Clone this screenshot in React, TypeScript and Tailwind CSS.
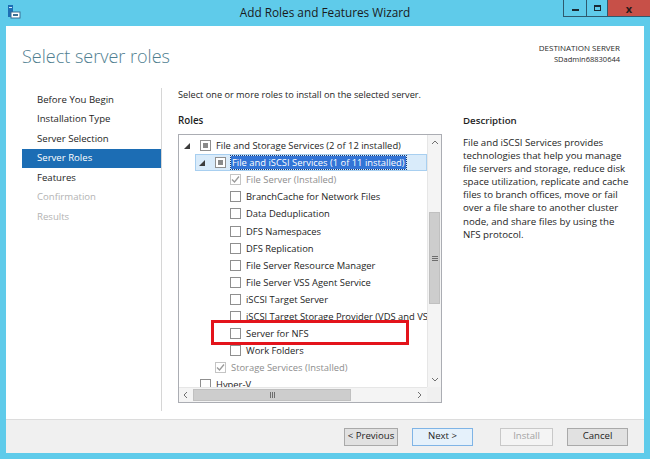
import { FC } from 'react';

type Box = 'empty' | 'partial' | 'done';

interface RoleRow {
  level: number;
  text: string;
  box: Box;
  expander?: boolean;
  selected?: boolean;
  disabled?: boolean;
}

const rows: RoleRow[] = [
  { level: 0, text: 'File and Storage Services (2 of 12 installed)', box: 'partial', expander: true },
  { level: 1, text: 'File and iSCSI Services (1 of 11 installed)', box: 'partial', expander: true, selected: true },
  { level: 2, text: 'File Server (Installed)', box: 'done', disabled: true },
  { level: 2, text: 'BranchCache for Network Files', box: 'empty' },
  { level: 2, text: 'Data Deduplication', box: 'empty' },
  { level: 2, text: 'DFS Namespaces', box: 'empty' },
  { level: 2, text: 'DFS Replication', box: 'empty' },
  { level: 2, text: 'File Server Resource Manager', box: 'empty' },
  { level: 2, text: 'File Server VSS Agent Service', box: 'empty' },
  { level: 2, text: 'iSCSI Target Server', box: 'empty' },
  { level: 2, text: 'iSCSI Target Storage Provider (VDS and VSS hardware providers)', box: 'empty' },
  { level: 2, text: 'Server for NFS', box: 'empty' },
  { level: 2, text: 'Work Folders', box: 'empty' },
  { level: 1, text: 'Storage Services (Installed)', box: 'done', disabled: true },
  { level: 0, text: 'Hyper-V', box: 'empty' },
];

const indent = ['w-[1px]', 'w-[16px]', 'w-[31px]'];

const steps = [
  { label: 'Before You Begin' },
  { label: 'Installation Type' },
  { label: 'Server Selection' },
  { label: 'Server Roles', active: true },
  { label: 'Features' },
  { label: 'Confirmation', disabled: true },
  { label: 'Results', disabled: true },
];

// wrapped the same way the wizard wraps it
const descriptionLines = [
  'File and iSCSI Services provides',
  'technologies that help you manage',
  'file servers and storage, reduce disk',
  'space utilization, replicate and cache',
  'files to branch offices, move or fail',
  'over a file share to another cluster',
  'node, and share files by using the',
  'NFS protocol.',
];

const CheckBox: FC<{ state: Box }> = ({ state }) => {
  if (state === 'done') {
    return (
      <span className="w-[11px] h-[11px] shrink-0 border border-[#c4c4c4] bg-white flex items-center justify-center">
        <svg width="9" height="9" viewBox="0 0 9 9">
          <path d="M1 4.5 L3.5 7 L8 1.5" fill="none" stroke="#9a9a9a" strokeWidth="1.3" />
        </svg>
      </span>
    );
  }
  return (
    <span className="w-[11px] h-[11px] shrink-0 border border-[#8f8f8f] bg-white flex items-center justify-center">
      {state === 'partial' && <span className="w-[5px] h-[5px] bg-[#8a8a8a]" />}
    </span>
  );
};

const Expander: FC = () => (
  <svg width="6" height="6" viewBox="0 0 6 6">
    <polygon points="6,0 6,6 0,6" fill="#3c3c3c" />
  </svg>
);

const Chevron: FC<{ dir: 'up' | 'down' | 'left' | 'right' }> = ({ dir }) => {
  const d = {
    up: 'M1 5 L4 2 L7 5',
    down: 'M1 2 L4 5 L7 2',
    left: 'M5 1 L2 4 L5 7',
    right: 'M2 1 L5 4 L2 7',
  }[dir];
  return (
    <svg width="8" height="8" viewBox="0 0 8 8">
      <path d={d} fill="none" stroke="#707070" strokeWidth="1" />
    </svg>
  );
};

const WizardButton: FC<{ label: string; width: string; variant?: 'default' | 'focus' | 'disabled' }> = ({
  label,
  width,
  variant = 'default',
}) => {
  const look =
    variant === 'focus'
      ? 'bg-[#e5f1fb] border-[#7fb4e6] text-[#1e1e1e]'
      : variant === 'disabled'
      ? 'bg-[#f4f4f4] border-[#c8c8c8] text-[#a3a3a3]'
      : 'bg-[#e1e1e1] border-[#a9a9a9] text-[#1e1e1e]';
  return (
    <div className={`${width} h-[18px] border flex items-center justify-center text-[9.6px] ${look}`}>{label}</div>
  );
};

export default function App() {
  return (
    <div
      className="w-[650px] h-[459px] bg-[#5fcbea] flex flex-col overflow-hidden text-[#1e1e1e]"
      style={{ fontFamily: '"Open Sans", "Noto Sans", sans-serif' }}
    >
      {/* Title bar */}
      <div className="h-[26px] shrink-0 grid grid-cols-[1fr_auto_1fr] items-start">
        <div className="pl-[7px] pt-[5px]">
          <svg width="14" height="14" viewBox="0 0 14 14">
            <rect x="1" y="0" width="5" height="12" fill="#1d6fb5" />
            <rect x="2" y="2" width="3" height="1" fill="#cfe6f7" />
            <rect x="4" y="7" width="9" height="6" fill="#ffffff" stroke="#3a6f93" strokeWidth="1" />
            <rect x="6" y="9" width="5" height="2" fill="#3a6f93" />
          </svg>
        </div>
        <div className="pt-[4px] text-[11.8px] leading-[16px] text-[#1a1a1a]">Add Roles and Features Wizard</div>
        <div className="flex justify-end">
          <div className="w-[23px] h-[17px] border-l border-b border-[#2e5a6e] flex items-end justify-center pb-[5px]">
            <span className="w-[7px] h-[2px] bg-[#1a2a33]" />
          </div>
          <div className="w-[21px] h-[17px] border-l border-b border-[#2e5a6e] flex items-center justify-center">
            <span className="w-[7px] h-[6px] border border-t-2 border-[#1a2a33]" />
          </div>
          <div className="w-[43px] h-[17px] bg-[#c75048] border-l border-b border-[#2e5a6e] flex items-center justify-center text-[11px] font-bold text-[#2a1a1a] leading-none">
            x
          </div>
        </div>
      </div>

      {/* Window body */}
      <div className="flex-1 mx-[6px] bg-white flex flex-col">
        {/* Header */}
        <div className="h-[62px] shrink-0 flex justify-between pl-[16px] pr-[24px]">
          <div className="pt-[19px] text-[18px] leading-[22px] font-light text-[#4f7e90]">Select server roles</div>
          <div className="pt-[17px] text-right leading-[10.5px] text-[#2a2a2a]">
            <div className="text-[8px]">DESTINATION SERVER</div>
            <div className="text-[7.5px]">SDadmin68830644</div>
          </div>
        </div>

        {/* Main */}
        <div className="flex-1 flex">
          {/* Steps */}
          <div className="ml-[16px] w-[140px] pt-[2px] border-r border-[#d6d6d6] mb-[8px] text-[9.6px]">
            {steps.map((s) => (
              <div
                key={s.label}
                className={`h-[19.5px] pl-[15px] flex items-center ${
                  s.active ? 'bg-[#1c6db4] text-white' : s.disabled ? 'text-[#b3b3b3]' : 'text-[#1e1e1e]'
                }`}
              >
                {s.label}
              </div>
            ))}
          </div>

          {/* Roles */}
          <div className="ml-[16px] w-[264px] text-[9.4px]">
            <div className="leading-[13px] text-[9.2px] whitespace-nowrap">
              Select one or more roles to install on the selected server.
            </div>
            <div className="mt-[13px] leading-[13px] text-[9.8px] font-semibold">Roles</div>
            <div className="mt-[7px] h-[269px] border border-[#abadb3] grid grid-cols-[1fr_14px] grid-rows-[1fr_15px]">
              <div className="relative overflow-hidden pt-[2px]">
                {rows.map((r) => (
                  <div key={r.text} className="h-[17.1px] flex items-stretch">
                    <div className={`${indent[r.level]} shrink-0`} />
                    <div
                      className={`flex-1 flex items-center px-[2px] whitespace-nowrap ${
                        r.selected ? 'bg-[#d9ebfa] border border-[#a8cff0]' : 'border border-transparent'
                      }`}
                    >
                      <span className="w-[17px] shrink-0 flex items-center pl-[1px]">{r.expander && <Expander />}</span>
                      <CheckBox state={r.box} />
                      <span
                        className={`ml-[5px] leading-[13px] ${
                          r.selected
                            ? 'bg-[#3274d6] text-white px-[1px] outline-1 outline-dotted outline-[#1a3a70]'
                            : r.disabled
                            ? 'text-[#8e8e8e]'
                            : 'text-[#1e1e1e]'
                        }`}
                      >
                        {r.text}
                      </span>
                    </div>
                  </div>
                ))}
                <div className="absolute left-[32px] top-[185px] w-[198px] h-[25px] border-[3px] border-[#e3131b]" />
              </div>

              {/* vertical scrollbar */}
              <div className="bg-[#f4f4f4] border-l border-[#e6e6e6] flex flex-col">
                <div className="h-[15px] flex items-center justify-center">
                  <Chevron dir="up" />
                </div>
                <div className="h-[62px]" />
                <div className="h-[92px] mx-[1px] bg-[#cdcdcd] border border-[#c0c0c0] flex items-center justify-center">
                  <span className="w-[6px] h-[5px] border-t border-b border-[#6d6d6d] flex items-center">
                    <span className="w-full h-px bg-[#6d6d6d]" />
                  </span>
                </div>
                <div className="flex-1" />
                <div className="h-[15px] flex items-center justify-center">
                  <Chevron dir="down" />
                </div>
              </div>

              {/* horizontal scrollbar */}
              <div className="bg-[#f4f4f4] border-t border-[#e6e6e6] flex">
                <div className="w-[14px] flex items-center justify-center">
                  <Chevron dir="left" />
                </div>
                <div className="w-[158px] my-[1px] bg-[#cdcdcd] border border-[#c0c0c0] flex items-center justify-center">
                  <span className="w-[5px] h-[6px] border-l border-r border-[#6d6d6d] flex justify-center">
                    <span className="w-px h-full bg-[#6d6d6d]" />
                  </span>
                </div>
                <div className="flex-1" />
                <div className="w-[14px] flex items-center justify-center">
                  <Chevron dir="right" />
                </div>
              </div>
              <div className="bg-[#f0f0f0]" />
            </div>
          </div>

          {/* Description */}
          <div className="ml-[21px] w-[180px] pt-[26px] text-[9.7px]">
            <div className="leading-[13px] font-semibold">Description</div>
            <div className="mt-[9px] leading-[13.1px] whitespace-nowrap">
              {descriptionLines.map((line) => (
                <div key={line}>{line}</div>
              ))}
            </div>
          </div>
        </div>

        {/* Footer */}
        <div className="h-[34px] shrink-0 bg-[#f0f0f0] border-t border-[#dcdcdc] flex items-center justify-end pr-[16px]">
          <WizardButton label="< Previous" width="w-[54px]" />
          <div className="w-[14px]" />
          <WizardButton label="Next >" width="w-[61px]" variant="focus" />
          <div className="w-[27px]" />
          <WizardButton label="Install" width="w-[53px]" variant="disabled" />
          <div className="w-[14px]" />
          <WizardButton label="Cancel" width="w-[61px]" />
        </div>
      </div>
      <div className="h-[6px] shrink-0" />
    </div>
  );
}
